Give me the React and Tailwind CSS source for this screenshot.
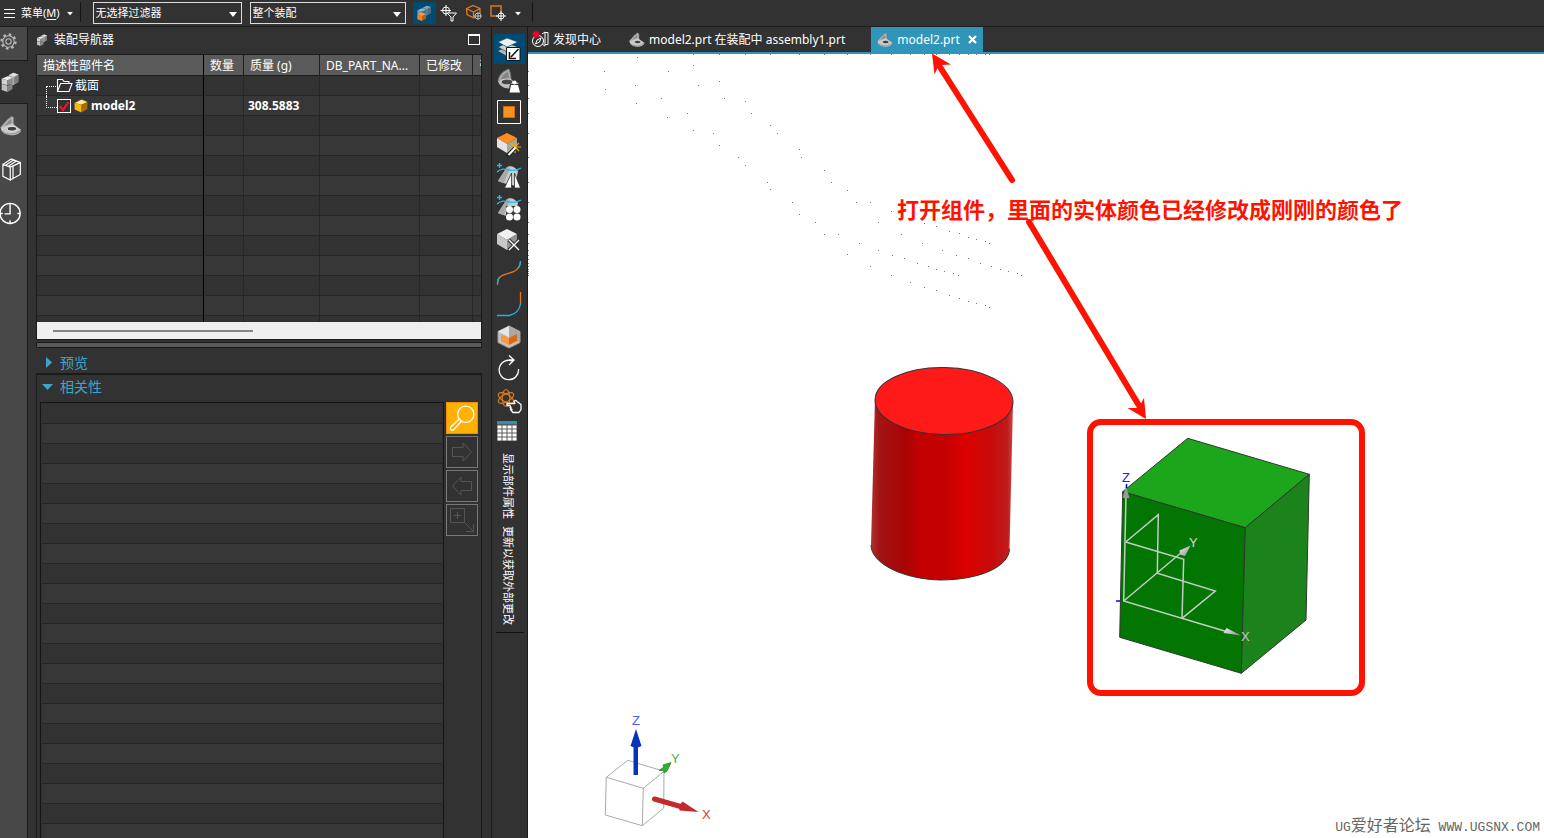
import { useState } from 'react'
import { clsx } from 'clsx'

const COLUMNS = [
  { label: '描述性部件名', width: 'w-[167px]' },
  { label: '数量', width: 'w-[40px]' },
  { label: '质量 (g)', width: 'w-[76px]' },
  { label: 'DB_PART_NA...', width: 'w-[100px]' },
  { label: '已修改', width: 'w-[53px]' },
  { label: '引', width: '' },
]

// Grid dots of the work plane, "x,y" in scene units
const DOTS = `573,57 637,57 604,71 668,71 605,89 635,85 636,103 661,98 667,117 687,113 693,130 693,65 698,85
719,81 724,98 745,101 751,113 770,125 777,133 799,149 801,157 713,133 719,145 738,157 745,165 767,182 770,189
792,202 799,214 815,222 824,170 831,182 847,190 856,202 870,202 891,211 878,222 924,223 936,226 949,231
959,233 968,237 976,239 985,241 989,243 824,234 838,234 859,243 901,234 922,243 942,250 956,255 968,258
980,263 991,266 1000,269 1008,271 1017,273 1021,275 878,250 892,255 904,258 917,263 928,266 936,269 944,271
953,273 958,275 847,254 870,266 891,275 910,282 924,287 936,290 949,295 959,298 968,301 976,303 985,305
989,307 528,71 528,85 528,98 528,113 528,133 528,157 528,182 528,202 528,222 528,234 528,243 528,250 528,255
528,259 528,263 528,266 528,269 528,271 528,273 528,275 693,54 719,54 745,54 770,54 799,54 824,54 847,54
870,54 891,54 910,54 924,54 936,54 949,54 959,54 968,54 976,54 985,54 989,54`
  .split(/\s+/)
  .map(p => p.split(','))

function Svg({ size = 24, box = '0 0 24 24', className, children }) {
  return (
    <svg width={size} height={size} viewBox={box} fill="none" aria-hidden="true"
      className={clsx('shrink-0 overflow-visible', className)}>
      {children}
    </svg>
  )
}

function Caret({ className }) {
  return (
    <svg width="8" height="5" viewBox="0 0 8 5" aria-hidden="true" className={clsx('shrink-0', className)}>
      <path d="M0 0h8L4 5z" fill="currentColor" />
    </svg>
  )
}

// Hinged part used for the part history and the document tabs
function PartIcon({ size = 16 }) {
  return (
    <Svg size={size}>
      <path d="M0 14L8 5 13 1l2 2v8l-9 6z" fill="#b5b5b5" stroke="#6d6d6d" />
      <path d="M4 13l5-6 3-3 1 7-6 4z" fill="#8c8c8c" />
      <path d="M1 14l12-5 10 7c0 4-6 6-11 6C6 22 1 19 1 14z" fill="#c9c9c9" />
      <ellipse cx="13" cy="15" rx="5" ry="2.500" fill="#3d3d3d" stroke="#eee" />
      <path d="M3 18c4 4 15 4 20-2" stroke="#838383" />
    </Svg>
  )
}

function CubesIcon({ size = 16, orange = false }) {
  return (
    <Svg size={size}>
      <path d="M10 5l6-4 6 2v9l-6 4-6-2z" fill={orange ? '#5d8296' : '#a9a9a9'} />
      <path d="M10 4l6-3 6 2-5 3z" fill={orange ? '#86a5b5' : '#dedede'} />
      <path d="M17 6l5-3v9l-5 3z" fill={orange ? '#4c7085' : '#7d7d7d'} />
      <path d="M2 8l7-3 6 2-6 3z" fill={orange ? '#9ab4c2' : '#ededed'} />
      <path d="M2 8l7 2v6l-7-2z" fill={orange ? '#7f9dad' : '#d2d2d2'} />
      <path d="M9 10l6-3v6l-6 3z" fill={orange ? '#4c7085' : '#8c8c8c'} />
      <path d="M2 14.500l7 2V24l-7-2.500z" fill={orange ? '#f7821b' : '#c0c0c0'} />
      <path d="M9 16.500l6-3v7L9 24z" fill={orange ? '#c9590c' : '#858585'} />
      {orange && <path d="M2 14.500l7-3 6 2-6 3z" fill="#ff9c48" />}
    </Svg>
  )
}

function GreyCube() {
  return (
    <>
      <path d="M0 5l10-5 10 5-10 6z" fill="#f0f0f0" />
      <path d="M0 5l10 6v10L0 15z" fill="#c8c8c8" />
      <path d="M20 5l-10 6v10l10-6z" fill="#929292" />
    </>
  )
}

function SurfaceBase() {
  return (
    <>
      <path d="M1 16L10 2c4-2 8 0 11 4l-3 15c-5-2-11-2-17-5z" fill="#cacaca" />
      <path d="M1 16L10 2l3 1-6 15z" fill="#a9a9a9" />
      <path d="M2.500-2v5M0 .500h5M0 7c4-4 8-3 12-2s7 1 12-2" stroke="#12c4f4" strokeWidth="1.300" />
    </>
  )
}

const TOOLS = [
  {
    label: '更新显示', art: <>
      <path d="M1 14l9-4 11 4-11 5z" fill="#b4b4b4" />
      <path d="M1 10l9-4 11 4-11 5z" fill="#d2d2d2" stroke="#004b73" strokeWidth=".7" />
      <path d="M1 5l9-4 11 4-11 5z" fill="#f0f0f0" stroke="#004b73" strokeWidth=".7" />
      <path d="M9.500 10.500h13.500v13H9.500z" fill="#fff" stroke="#161616" />
      <path d="M21.500 12L14 20m-1.500-5v6.500H19" stroke="#161616" strokeWidth="1.600" />
    </>,
  },
  {
    label: '部件质量', art: <>
      <path d="M1 12C2 6 6 2 12 0c1 3 2 6 2 10l-6 2z" fill="#a9a9a9" stroke="#747474" />
      <path d="M4 10c1-3 4-6 7-7l1 6-4 2z" fill="#848484" />
      <path d="M1 12l5-2 16 4-6 5C8 21 2 17 1 12z" fill="#b9b9b9" />
      <ellipse cx="10" cy="13" rx="6" ry="3" fill="#454545" stroke="#ddd" />
      <path d="M13 15h9l2.500 9.500H11z" fill="#323232" />
      <circle cx="17.500" cy="13.500" r="2" fill="#fff" />
      <path d="M14 16h7l2 7.500H12.500z" fill="#fff" />
    </>,
  },
  {
    label: '显示部件', art: <>
      <path d="M.5-.500h23v23H.5z" stroke="#fff" />
      <path d="M6.500 5.500h11v11h-11z" fill="#f7931e" stroke="#d3690b" />
    </>,
  },
  {
    label: '创建实体', art: <>
      <path d="M0 5l10-5 10 5-10 6z" fill="#ff8c1f" />
      <path d="M0 5l10 6v9L0 14z" fill="#e4e4e4" />
      <path d="M20 5l-10 6v9l10-6z" fill="#a6a6a6" />
      <path d="M18 8v12M12 14h12M14 10l8 8M22 10l-8 8" stroke="#e2a91f" strokeWidth="1.200" />
      <path d="M10.500 23l7.500-8" stroke="#222" strokeWidth="4" />
      <path d="M11.500 22l7-7.500" stroke="#fff" strokeWidth="2" />
    </>,
  },
  {
    label: '镜像', art: <>
      <SurfaceBase />
      <path d="M7.500 23L14.500 8v15zM17.500 8v15h6z" fill="#fff" stroke="#323232" strokeWidth=".8" />
    </>,
  },
  {
    label: '阵列', art: <>
      <SurfaceBase />
      <path d="M9 9h14v14H9z" fill="#3a3a3a" />
      <g fill="#fff">
        <circle cx="12.500" cy="12.500" r="3.500" /><circle cx="20" cy="12.500" r="3.500" />
        <circle cx="12.500" cy="20" r="3.500" /><circle cx="20" cy="20" r="3.500" />
      </g>
    </>,
  },
  {
    label: '删除实体', art: <>
      <GreyCube />
      <path d="M12 11l10 10M22 11L12 21" stroke="#323232" strokeWidth="3.500" />
      <path d="M12 11l10 10M22 11L12 21" stroke="#fff" strokeWidth="1.300" />
    </>,
  },
  {
    label: '艺术样条', art: <>
      <path d="M.500 23.500c0-3 0-5 2-7 3-4 12-4 16-7 3-2 5-5 5-9" stroke="#e0791e" strokeWidth="1.300" />
      <path d="M.500 23.500c0-3 0-5 2-7M21 7c2-2 2.500-4 2.500-7" stroke="#12b9e8" strokeWidth="1.300" />
    </>,
  },
  {
    label: '圆角曲线', art: <>
      <path d="M23.500-1v12" stroke="#e0791e" strokeWidth="1.300" />
      <path d="M23.500 11c-1 6-5 10-11 11.500H0" stroke="#12b9e8" strokeWidth="1.300" />
    </>,
  },
  {
    label: '包容体', art: <>
      <path d="M12 1l11 5.500v11L12 23 1 17.500v-11z" fill="#c4c4c4" stroke="#9d9d9d" />
      <path d="M12 1v11l11 5.500v-11z" fill="#a8a8a8" />
      <path d="M12 1L1 6.500l11 5.500z" fill="#e6e6e6" />
      <path d="M4 9l8 4v7l-8-4z" fill="#ff9637" />
      <path d="M20 9l-8 4v7l8-4z" fill="#dd6811" />
    </>,
  },
  {
    label: '刷新', art: <>
      <path d="M15.500 4A9.700 9.700 0 1 0 21.500 12" stroke="#fff" strokeWidth="1.300" />
      <path d="M12-1.500L17 3l-5 5M17 3h-5" stroke="#fff" strokeWidth="1.300" />
    </>,
  },
  {
    label: '移动对象', art: <>
      <g stroke="#d9781d" strokeWidth="1.200">
        <ellipse cx="9" cy="9" rx="3.800" ry="8.500" />
        <ellipse cx="9" cy="9" rx="3.800" ry="8.500" transform="rotate(60 9 9)" />
        <ellipse cx="9" cy="9" rx="3.800" ry="8.500" transform="rotate(120 9 9)" />
      </g>
      <path d="M10 14.500h8l-1-2c1-2 2-1 3 0l4 3v5l-2 3h-6l-2.500-3H15l-2-2h1l-1-2h-3z" fill="#323232" stroke="#fff" strokeWidth="1.300" strokeLinejoin="round" />
    </>,
  },
  {
    label: '部件列表', art: <>
      <path d="M0 0h20v20H0z" fill="#5a5a5a" />
      <path d="M0 0h20v3H0z" fill="#2d8fb2" />
      <path d="M.500 6h19M.500 10h19M.500 14h19M.500 18h19" stroke="#fff" strokeWidth="3" strokeDasharray="4 1" />
    </>,
  },
]

function FilterSelect({ label, value, className }) {
  return (
    <div className={clsx('relative flex h-[22px] border border-[#dcdcdc] bg-[#323232]', className)}>
      <select aria-label={label} className="w-full appearance-none bg-transparent pr-4 pl-0.5 text-[11px] text-white outline-none">
        <option>{value}</option>
      </select>
      <Caret className="pointer-events-none absolute top-[9px] right-1" />
    </div>
  )
}

function TopBar() {
  return (
    <header className="flex h-[27px] shrink-0 items-start border-b border-[#1e1e1e] pt-0.5">
      <button className="flex h-[22px] items-center pl-1 text-[11px]">
        <Svg size={11} box="0 0 11 11"><path d="M0 1.500h11M0 5.500h11M0 9.500h11" stroke="#fff" /></Svg>
        <span className="pl-1.5">菜单(<u className="underline-offset-2">M</u>)</span>
        <Caret className="ml-1.5 scale-75" />
      </button>
      <div className="ml-1.5 h-5 w-px bg-[#151515]" />
      <FilterSelect label="选择过滤器" value="无选择过滤器" className="ml-3 w-[149px]" />
      <FilterSelect label="选择范围" value="整个装配" className="ml-2 w-[156px]" />
      <button aria-label="允许选择组件" className="ml-[7px] flex h-[22px] w-[23px] items-center justify-center bg-[#004b73]">
        <CubesIcon size={16} orange />
      </button>
      <button aria-label="重置过滤器" className="ml-1 flex h-[22px] w-5 items-center">
        <Svg size={18} box="0 0 18 18">
          <path d="M6 1v11M.500 6.500H11" stroke="#fff" />
          <circle cx="6" cy="6.500" r="3.500" stroke="#fff" />
          <path d="M7 9h9.500l-3.500 4v4h-2v-4z" fill="#323232" stroke="#fff" />
        </Svg>
      </button>
      <button aria-label="定向实体" className="ml-1.5 flex h-[22px] w-5 items-center">
        <Svg size={18} box="0 0 18 18">
          <path d="M.500 4.500L7 1.500l7 3v6l-6 3.500-7-3.500zM.500 4.500L7.500 8l6.500-3.500M7.500 8v6" stroke="#e0791e" strokeWidth="1.300" />
          <circle cx="12" cy="12" r="3" fill="#323232" stroke="#bbb" />
          <path d="M12 8v8M8 12h8" stroke="#bbb" />
        </Svg>
      </button>
      <button aria-label="矩形选择" className="ml-1 flex h-[22px] items-center">
        <Svg size={18} box="0 0 18 18">
          <path d="M1 2h10v10H1z" stroke="#e0791e" strokeWidth="1.400" />
          <circle cx="11" cy="12" r="3" fill="#323232" stroke="#fff" />
          <path d="M11 7v10M6 12h10" stroke="#fff" />
        </Svg>
        <Caret className="ml-1.5 scale-75" />
      </button>
      <div className="ml-2.5 h-5 w-px bg-[#151515]" />
    </header>
  )
}

function ResourceBar() {
  const item = 'flex w-full items-center justify-start border-r border-[#1b1b1b] bg-[#484848]'
  return (
    <nav className="flex w-7 shrink-0 flex-col bg-[#484848]">
      <button aria-label="设置" className={clsx(item, 'h-[34px] border-b pr-2 pb-1')}>
        <Svg size={17}>
          <circle cx="12" cy="12" r="3.800" stroke="#bbb" strokeWidth="1.500" />
          <circle cx="12" cy="12" r="8" stroke="#bbb" strokeWidth="1.500" />
          <circle cx="12" cy="12" r="10" stroke="#bbb" strokeWidth="3" strokeDasharray="3.600 4.254" />
        </Svg>
      </button>
      <button aria-label="装配导航器" className="flex h-[42px] w-full items-center bg-[#323232]"><CubesIcon size={20} /></button>
      <button aria-label="部件导航器" className={clsx(item, 'h-11 border-t')}><PartIcon size={22} /></button>
      <button aria-label="重用库" className={clsx(item, 'h-11 pl-0.5')}>
        <Svg size={22}>
          <path d="M1 7l8 3v14l-8-4zM9 10l11-5v13L9 24M12 9v13M1 7l9-6M4 8l9-6M7 9l9-6M9 10l11-5M10 1l10 4" stroke="#fff" strokeWidth="1.300" />
        </Svg>
      </button>
      <button aria-label="历史记录" className={clsx(item, 'h-11')}>
        <Svg size={22}>
          <circle cx="11" cy="12.500" r="11" stroke="#fff" strokeWidth="1.500" />
          <path d="M11 2v11H5M0 12.500h3M19 12.500h3M11 20v3" stroke="#fff" strokeWidth="1.500" />
        </Svg>
      </button>
      <div className="w-full flex-1 border-r border-[#1b1b1b]" />
    </nav>
  )
}

function PartTable() {
  const cell = 'border-r border-b border-[#272727] p-0 first:border-r-black last:border-r-0'
  return (
    <div className="h-[268px] shrink-0 overflow-hidden border border-b-0 border-[#1b1b1b]">
      <table className="w-full table-fixed border-separate border-spacing-0 text-left">
        <thead>
          <tr className="h-[21px] bg-[#5a5a5a]">
            {COLUMNS.map(col => (
              <th key={col.label} className={clsx('overflow-hidden border-r border-b border-[#1f1f1f] px-1.5 pt-0.5 pb-0 font-normal whitespace-nowrap first:border-r-black last:border-r-0', col.width)}>
                {col.label}
              </th>
            ))}
          </tr>
        </thead>
        <tbody>
          <tr className="h-5">
            <td className={cell}>
              <div className="flex h-[19px] items-center pl-[9px]">
                <span className="mt-2.5 h-2.5 w-2.5 border-t border-l border-dotted border-white" />
                <Svg size={17} box="0 0 17 17">
                  <path d="M1.500 14.500v-12h5l1.500 2h5v2M1.500 14.500l3-8h11.500l-3 8z" stroke="#fff" strokeWidth="1.100" />
                </Svg>
                <span className="pl-0.5">截面</span>
              </div>
            </td>
            {COLUMNS.slice(1).map(col => <td key={col.label} className={cell} />)}
          </tr>
          <tr className="h-5 bg-[#373737] font-bold">
            <td className={cell}>
              <div className="flex h-[19px] items-center pl-[9px]">
                <span className="mb-2 h-3 w-[11px] border-b border-l border-dotted border-white" />
                <label className="relative flex items-center">
                  <input type="checkbox" defaultChecked className="h-[14px] w-[14px] appearance-none border border-white bg-[#323232]" />
                  <Svg size={12} box="0 0 12 12" className="pointer-events-none absolute left-px">
                    <path d="M1.500 6l3.500 4L10.500 2" stroke="#f0142d" strokeWidth="2" />
                  </Svg>
                  <Svg size={14} className="ml-[3px]">
                    <path d="M1 7l12-6 10 4-10 5z" fill="#ffe58a" />
                    <path d="M1 7l12 3v13L1 18z" fill="#f5b90f" />
                    <path d="M23 5l-10 5v13l10-6z" fill="#a86c04" />
                  </Svg>
                  <span className="pl-[3px]">model2</span>
                </label>
              </div>
            </td>
            <td className={cell} />
            <td className={clsx(cell, 'pl-1')}>308.5883</td>
            {COLUMNS.slice(3).map(col => <td key={col.label} className={cell} />)}
          </tr>
          {Array.from({ length: 11 }, (_, i) => (
            <tr key={i} className="h-5 even:bg-[#373737]">
              {COLUMNS.map(col => <td key={col.label} className={cell} />)}
            </tr>
          ))}
        </tbody>
      </table>
    </div>
  )
}

function DependencyPanel() {
  const button = 'flex h-8 w-8 items-center justify-center border'
  return (
    <section className="flex min-h-0 flex-1 flex-col border-x border-t-2 border-[#1b1b1b]">
      <button className="flex h-[27px] shrink-0 items-center pb-1 pl-[5px] text-[14px] text-[#3da5cb]">
        <svg width="11" height="6" viewBox="0 0 11 6" aria-hidden="true"><path d="M0 0h11L5.500 6z" fill="currentColor" /></svg>
        <span className="pl-[7px]">相关性</span>
      </button>
      <div className="flex min-h-0 flex-1 gap-0.5 pr-[3px] pl-[3px]">
        <div className="min-w-0 flex-1 overflow-hidden border border-b-0 border-[#151515] px-px">
          {Array.from({ length: 40 }, (_, i) => (
            <div key={i} className="h-5 border-b border-[#262626] even:bg-[#373737] first:h-[21px]" />
          ))}
        </div>
        <div className="flex flex-col gap-0.5">
          <button aria-label="查找" className={clsx(button, 'border-[#f28c0a] bg-[#ffb000]')}>
            <Svg size={26}>
              <circle cx="15.500" cy="8.500" r="7.500" stroke="#fff" strokeWidth="1.200" />
              <path d="M9.500 13l-8 7.500c-1 1.500 1 3.500 2.500 2.500l7.500-8" stroke="#fff" strokeWidth="1.200" />
            </Svg>
          </button>
          <button aria-label="下一个" disabled className={clsx(button, 'border-[#777]')}>
            <Svg size={20} box="0 0 20 20"><path d="M.500 5.500H11V1l8.500 9L11 19v-4.500H.500z" stroke="#555" /></Svg>
          </button>
          <button aria-label="上一个" disabled className={clsx(button, 'border-[#777]')}>
            <Svg size={20} box="0 0 20 20"><path d="M19.500 5.500H9V1L.500 10 9 19v-4.500h10.500z" stroke="#555" /></Svg>
          </button>
          <button aria-label="详细" disabled className={clsx(button, 'border-[#777]')}>
            <Svg size={24}><path d="M.500.500h14v14H.500zM7.500 4v7M4 7.500h7M14.500 14.500l9 9M23.500 16v7.500H16" stroke="#555" /></Svg>
          </button>
        </div>
      </div>
    </section>
  )
}

function Navigator() {
  return (
    <aside className="flex w-[454px] shrink-0 flex-col pl-2">
      <div className="flex h-[27px] shrink-0 items-center pr-0.5 pb-0.5">
        <CubesIcon size={12} />
        <h2 className="flex-1 pl-1.5">装配导航器</h2>
        <button aria-label="最大化" className="h-[11px] w-3 border border-t-2 border-white" />
      </div>
      <PartTable />
      <div className="flex h-[18px] shrink-0 items-center border-x border-b border-[#1b1b1b] bg-[#efefef] pl-4">
        <div className="h-0.5 w-[200px] bg-[#868686]" />
      </div>
      <div className="mt-0.5 h-1.5 shrink-0 border border-[#1b1b1b] bg-[#5a5a5a]" />
      <button className="flex h-[25px] shrink-0 items-center pt-1 pl-2.5 text-[14px] text-[#3da5cb]">
        <svg width="6" height="11" viewBox="0 0 6 11" aria-hidden="true"><path d="M0 0v11l6-5.500z" fill="currentColor" /></svg>
        <span className="pl-2">预览</span>
      </button>
      <DependencyPanel />
    </aside>
  )
}

function ToolStrip() {
  const [active, setActive] = useState(0)
  return (
    <div className="ml-[9px] flex w-[37px] shrink-0 flex-col items-center border-r border-l border-[#1b1b1b] pt-[7px]">
      <div className="flex flex-col gap-0.5">
        {TOOLS.map((tool, i) => (
          <button key={tool.label} aria-label={tool.label} onClick={() => setActive(i)}
            className={clsx('flex h-[30px] w-[31px] items-center pl-[3px]', i === active && 'bg-[#004b73]')}>
            <Svg>{tool.art}</Svg>
          </button>
        ))}
      </div>
      <div className="flex w-7 flex-col items-center justify-center border-b border-[#111] pt-[5px] pr-1 pb-[7px] text-[11px] [writing-mode:vertical-rl] [text-orientation:sideways]">
        <div className="flex gap-[7px] leading-[14px]">
          <button>显示部件属性</button>
          <button>更新以获取外部更改</button>
        </div>
      </div>
    </div>
  )
}

function DocumentTabs() {
  return (
    <div className="flex h-[27px] shrink-0 border-b-2 border-[#3096b9]">
      <button className="flex items-center gap-1 pl-1">
        <Svg size={17} box="0 0 17 17">
          <circle cx="6" cy="10" r="5.500" stroke="#fff" />
          <path d="M3.500 13l1.500-4 4-2-1.500 4zM10 3l3-2v14l-3-2M13 1.500h3v12h-3" stroke="#fff" />
          <circle cx="4" cy="3.500" r="3.300" fill="#f0002d" />
        </Svg>
        发现中心
      </button>
      <button className="flex items-center gap-1 pr-[26px] pl-7">
        <PartIcon />
        <span>model2.prt 在装配中 assembly1.prt</span>
      </button>
      <div className="flex items-center gap-2 bg-[#3096b9] px-1.5">
        <button className="flex items-center gap-1"><PartIcon />model2.prt</button>
        <button aria-label="关闭">
          <Svg size={9} box="0 0 9 9"><path d="M1 1l7 7M8 1L1 8" stroke="#fff" strokeWidth="2.200" /></Svg>
        </button>
      </div>
    </div>
  )
}

function Scene() {
  return (
    <svg viewBox="528 54 1016 784" className="h-full w-full" fontFamily="Liberation Sans, sans-serif">
      <defs>
        <linearGradient id="cylinder">
          <stop offset="0" stopColor="#b03030" />
          <stop offset=".06" stopColor="#a31414" />
          <stop offset=".24" stopColor="#a80404" />
          <stop offset=".36" stopColor="#c50000" />
          <stop offset=".52" stopColor="#c40000" />
          <stop offset=".66" stopColor="#dc0000" />
          <stop offset=".85" stopColor="#c90a0a" />
          <stop offset=".96" stopColor="#bd1c1c" />
          <stop offset="1" stopColor="#cf4444" />
        </linearGradient>
        <linearGradient id="cone" x1="0" x2="1" y1="0" y2="1">
          <stop offset="0" stopColor="#f3f3f3" />
          <stop offset="1" stopColor="#8c8c8c" />
        </linearGradient>
      </defs>

      <g fill="#777">
        {DOTS.map(([x, y]) => <rect key={x + '-' + y} x={x} y={y} width="1" height="1" />)}
      </g>

      {/* Cylinder */}
      <path d="M875 399L871 545C871 563 902 579 940 580C979 580 1009 567 1009.500 549L1013 403z" fill="url(#cylinder)" />
      <path d="M871 545C871 563 902 579 940 580C979 580 1009 567 1009.500 549" fill="none" stroke="#333" />
      <ellipse cx="944" cy="401" rx="69" ry="33.500" fill="#ff1a1a" stroke="#333" transform="rotate(1 944 401)" />

      {/* Block */}
      <g stroke="#2b3a2b" strokeLinejoin="round">
        <path d="M1187.700 438.300L1309.300 474.300 1245.300 527.700 1122.700 491.700z" fill="#1ba61b" />
        <path d="M1122.700 491.700L1245.300 527.700 1241.300 673.300 1119.700 637.300z" fill="#027502" />
        <path d="M1309.300 474.300L1306 620 1241.300 673.300 1245.300 527.700z" fill="#1c821c" />
      </g>
      <g fill="none" stroke="#c4ccc4" strokeWidth="1.500">
        <path d="M1126 496L1123.700 601 1228 632M1123.700 601L1182 552" />
        <path d="M1125.700 542L1183.700 559.300 1182 618.300M1125.700 542L1158.300 514.700 1157.300 573.300L1215.300 591 1182 618.300" />
      </g>
      <path d="M1126 486l3.500 12h-7z" fill="#999" />
      <path d="M1190.500 545.500l-11 5 .500 4 5 1.500z" fill="url(#cone)" />
      <path d="M1241 635.500l-14.500-7.500-3 5z" fill="url(#cone)" />
      <path d="M1126.500 484v4M1116 601h4" stroke="#00f" strokeWidth="1.500" />
      <text x="1122" y="482" fontSize="13" fill="#2020e0">Z</text>
      <text x="1189" y="547" fontSize="13" fill="#d8dcd8">Y</text>
      <text x="1241" y="641" fontSize="13" fill="#c4c8c4">X</text>

      {/* View triad */}
      <g fill="none" stroke="#aaa">
        <path d="M627.700 760.300L664 771.300 643.300 788.300 606.300 777.300zM606.300 777.300L605.300 815 642.300 825.700 643.300 788.300M642.300 825.700L663.700 808 664 771.300" />
      </g>
      <path d="M633.500 746h4.500v29h-4.500z" fill="#0634b8" />
      <path d="M636 729l5.500 17q-5.500 3-11 0z" fill="#0634b8" />
      <path d="M671 762.700l-8 2.300 1 2-5 3.500 5-.500v3l3-2z" fill="#33ad33" stroke="#2b962b" />
      <path d="M654.500 799l26 7.500" stroke="#c22a2e" strokeWidth="5" strokeLinecap="round" />
      <path d="M698.500 812l-16-10.500q-4 4-3 9z" fill="#c22a2e" />
      <text x="632" y="725" fontSize="13" fill="#4c5cff">Z</text>
      <text x="671" y="763" fontSize="13" fill="#4bb04b">Y</text>
      <text x="702" y="819" fontSize="13" fill="#d03c3c">X</text>

      {/* Annotation */}
      <g fill="#ff1200" stroke="none">
        <path d="M1012 180L940 67M1029 222L1138 404" stroke="#ff1200" strokeWidth="6" strokeLinecap="round" />
        <path d="M932 53.500L951 64.500 942 65 938 67 934.500 74.500z" />
        <path d="M1146 419L1144 398 1140 405 1136 408 1127.500 408z" />
        <text x="1150" y="218" fontSize="22" fontWeight="bold" textAnchor="middle" fontFamily="Noto Sans CJK SC, sans-serif">
          打开组件，里面的实体颜色已经修改成刚刚的颜色了
        </text>
      </g>
      <rect x="1090" y="422" width="272" height="271" rx="11" fill="none" stroke="#ff1200" strokeWidth="6" />
    </svg>
  )
}

export default function App() {
  return (
    <div className="flex h-screen flex-col overflow-hidden bg-[#323232] font-['Noto_Sans','Noto_Sans_CJK_SC',sans-serif] text-[12px] leading-4 text-white">
      <TopBar />
      <div className="flex min-h-0 flex-1">
        <ResourceBar />
        <Navigator />
        <ToolStrip />
        <main className="flex min-w-0 flex-1 flex-col">
          <DocumentTabs />
          <div className="relative min-h-0 flex-1 bg-white">
            <Scene />
            <p className="absolute right-1 bottom-0.5 font-['Liberation_Mono','Noto_Sans_CJK_SC',monospace] text-[13px] text-[#666]">
              UG<span className="text-[16px]">爱好者论坛</span> WWW.UGSNX.COM
            </p>
          </div>
        </main>
      </div>
    </div>
  )
}
